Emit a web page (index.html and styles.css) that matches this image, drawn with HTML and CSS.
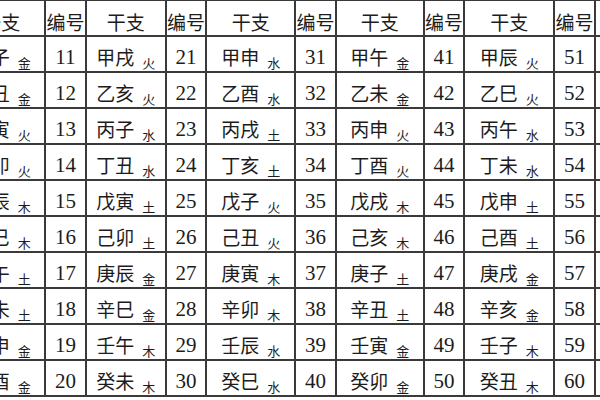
FILE: index.html
```html
<!DOCTYPE html>
<html lang="zh-CN">
<head>
<meta charset="utf-8">
<title>六十甲子纳音表</title>
<link rel="stylesheet" href="styles.css">
</head>
<body>
<div class="frame">
<table class="jz">
<colgroup>
<col class="c-gz-a"><col class="c-no"><col class="c-gz-b"><col class="c-no"><col class="c-gz-c"><col class="c-no"><col class="c-gz-d"><col class="c-no"><col class="c-gz-e"><col class="c-no"><col class="c-gz-a">
</colgroup>
<thead>
<tr><th>干支</th><th>编号</th><th>干支</th><th>编号</th><th>干支</th><th>编号</th><th>干支</th><th>编号</th><th>干支</th><th>编号</th><th>干支</th></tr>
</thead>
<tbody>
<tr><td class="gz"><span class="nm">甲子</span><span class="el">金</span></td><td class="no">11</td><td class="gz"><span class="nm">甲戌</span><span class="el">火</span></td><td class="no">21</td><td class="gz"><span class="nm">甲申</span><span class="el">水</span></td><td class="no">31</td><td class="gz"><span class="nm">甲午</span><span class="el">金</span></td><td class="no">41</td><td class="gz"><span class="nm">甲辰</span><span class="el">火</span></td><td class="no">51</td><td class="gz"><span class="nm">甲寅</span><span class="el">水</span></td></tr>
<tr><td class="gz"><span class="nm">乙丑</span><span class="el">金</span></td><td class="no">12</td><td class="gz"><span class="nm">乙亥</span><span class="el">火</span></td><td class="no">22</td><td class="gz"><span class="nm">乙酉</span><span class="el">水</span></td><td class="no">32</td><td class="gz"><span class="nm">乙未</span><span class="el">金</span></td><td class="no">42</td><td class="gz"><span class="nm">乙巳</span><span class="el">火</span></td><td class="no">52</td><td class="gz"><span class="nm">乙卯</span><span class="el">水</span></td></tr>
<tr><td class="gz"><span class="nm">丙寅</span><span class="el">火</span></td><td class="no">13</td><td class="gz"><span class="nm">丙子</span><span class="el">水</span></td><td class="no">23</td><td class="gz"><span class="nm">丙戌</span><span class="el">土</span></td><td class="no">33</td><td class="gz"><span class="nm">丙申</span><span class="el">火</span></td><td class="no">43</td><td class="gz"><span class="nm">丙午</span><span class="el">水</span></td><td class="no">53</td><td class="gz"><span class="nm">丙辰</span><span class="el">土</span></td></tr>
<tr><td class="gz"><span class="nm">丁卯</span><span class="el">火</span></td><td class="no">14</td><td class="gz"><span class="nm">丁丑</span><span class="el">水</span></td><td class="no">24</td><td class="gz"><span class="nm">丁亥</span><span class="el">土</span></td><td class="no">34</td><td class="gz"><span class="nm">丁酉</span><span class="el">火</span></td><td class="no">44</td><td class="gz"><span class="nm">丁未</span><span class="el">水</span></td><td class="no">54</td><td class="gz"><span class="nm">丁巳</span><span class="el">土</span></td></tr>
<tr><td class="gz"><span class="nm">戊辰</span><span class="el">木</span></td><td class="no">15</td><td class="gz"><span class="nm">戊寅</span><span class="el">土</span></td><td class="no">25</td><td class="gz"><span class="nm">戊子</span><span class="el">火</span></td><td class="no">35</td><td class="gz"><span class="nm">戊戌</span><span class="el">木</span></td><td class="no">45</td><td class="gz"><span class="nm">戊申</span><span class="el">土</span></td><td class="no">55</td><td class="gz"><span class="nm">戊午</span><span class="el">火</span></td></tr>
<tr><td class="gz"><span class="nm">己巳</span><span class="el">木</span></td><td class="no">16</td><td class="gz"><span class="nm">己卯</span><span class="el">土</span></td><td class="no">26</td><td class="gz"><span class="nm">己丑</span><span class="el">火</span></td><td class="no">36</td><td class="gz"><span class="nm">己亥</span><span class="el">木</span></td><td class="no">46</td><td class="gz"><span class="nm">己酉</span><span class="el">土</span></td><td class="no">56</td><td class="gz"><span class="nm">己未</span><span class="el">火</span></td></tr>
<tr><td class="gz"><span class="nm">庚午</span><span class="el">土</span></td><td class="no">17</td><td class="gz"><span class="nm">庚辰</span><span class="el">金</span></td><td class="no">27</td><td class="gz"><span class="nm">庚寅</span><span class="el">木</span></td><td class="no">37</td><td class="gz"><span class="nm">庚子</span><span class="el">土</span></td><td class="no">47</td><td class="gz"><span class="nm">庚戌</span><span class="el">金</span></td><td class="no">57</td><td class="gz"><span class="nm">庚申</span><span class="el">木</span></td></tr>
<tr><td class="gz"><span class="nm">辛未</span><span class="el">土</span></td><td class="no">18</td><td class="gz"><span class="nm">辛巳</span><span class="el">金</span></td><td class="no">28</td><td class="gz"><span class="nm">辛卯</span><span class="el">木</span></td><td class="no">38</td><td class="gz"><span class="nm">辛丑</span><span class="el">土</span></td><td class="no">48</td><td class="gz"><span class="nm">辛亥</span><span class="el">金</span></td><td class="no">58</td><td class="gz"><span class="nm">辛酉</span><span class="el">木</span></td></tr>
<tr><td class="gz"><span class="nm">壬申</span><span class="el">金</span></td><td class="no">19</td><td class="gz"><span class="nm">壬午</span><span class="el">木</span></td><td class="no">29</td><td class="gz"><span class="nm">壬辰</span><span class="el">水</span></td><td class="no">39</td><td class="gz"><span class="nm">壬寅</span><span class="el">金</span></td><td class="no">49</td><td class="gz"><span class="nm">壬子</span><span class="el">木</span></td><td class="no">59</td><td class="gz"><span class="nm">壬戌</span><span class="el">水</span></td></tr>
<tr><td class="gz"><span class="nm">癸酉</span><span class="el">金</span></td><td class="no">20</td><td class="gz"><span class="nm">癸未</span><span class="el">木</span></td><td class="no">30</td><td class="gz"><span class="nm">癸巳</span><span class="el">水</span></td><td class="no">40</td><td class="gz"><span class="nm">癸卯</span><span class="el">金</span></td><td class="no">50</td><td class="gz"><span class="nm">癸丑</span><span class="el">木</span></td><td class="no">60</td><td class="gz"><span class="nm">癸亥</span><span class="el">水</span></td></tr>
</tbody>
</table>
</div>
</body>
</html>
```
FILE: styles.css
```css
html, body {
  margin: 0;
  padding: 0;
  background: #ffffff;
}
.frame {
  width: 600px;
  height: 400px;
  overflow: hidden;
}
.jz {
  border-collapse: collapse;
  table-layout: fixed;
  width: 728px;
  margin-left: -44px;
  margin-top: -1px;
  color: #1c1c1c;
  font-family: "Noto Sans CJK SC", "Liberation Serif", sans-serif;
}
.c-gz-a { width: 88px; }
.c-gz-b { width: 80px; }
.c-gz-c { width: 89px; }
.c-gz-d { width: 88px; }
.c-gz-e { width: 90px; }
.c-no { width: 40px; }
.jz th, .jz td {
  border: 2px solid #3a3a3a;
  padding: 7px 0 0 0;
  text-align: center;
  white-space: nowrap;
  overflow: hidden;
}
.jz tr { height: 36px; }
.jz th {
  font-weight: 400;
  font-size: 19px;
  line-height: 1;
}
.jz td.no {
  font-family: "Liberation Serif", serif;
  font-size: 21px;
  line-height: 1;
}
.nm {
  font-size: 19px;
  line-height: 1;
}
.el {
  font-size: 13px;
  line-height: 1;
  margin-left: 8px;
  position: relative;
  top: 3px;
}
```
